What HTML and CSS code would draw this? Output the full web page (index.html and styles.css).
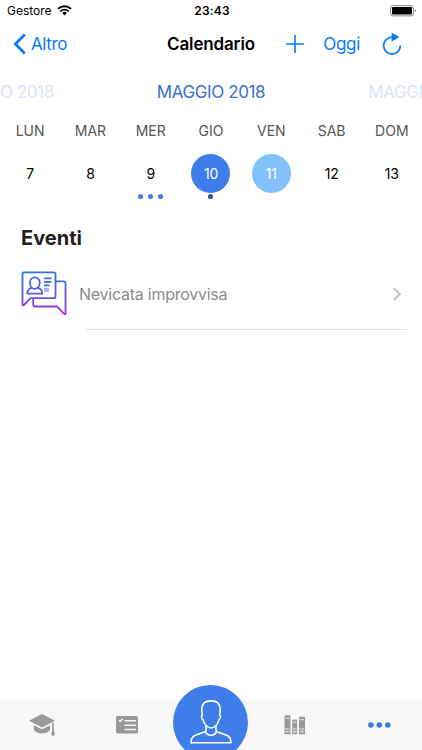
FILE: index.html
```html
<!DOCTYPE html>
<html lang="it">
<head>
  <meta charset="UTF-8">
  <meta name="viewport" content="width=device-width, initial-scale=1">
  <title>Calendario</title>
  <link rel="stylesheet" href="styles.css">
</head>
<body>
  <div class="status-bar">
    <div class="carrier">
      <span>Gestore</span>
      <svg width="15" height="11" viewBox="0 0 15 11">
        <path d="M1 3.9a9.4 9.4 0 0 1 13 0" fill="none" stroke="#000" stroke-width="1.9"/>
        <path d="M3.3 6.3a6.1 6.1 0 0 1 8.4 0" fill="none" stroke="#000" stroke-width="1.8"/>
        <path d="M7.5 10.4L5.1 8a3.5 3.5 0 0 1 4.8 0z"/>
      </svg>
    </div>
    <div class="clock">23:43</div>
    <svg class="battery" width="27" height="12" viewBox="0 0 27 12">
      <rect x=".6" y=".6" width="22.8" height="10.3" rx="2.4" fill="#fff" stroke="#888" stroke-width="1"/>
      <rect x="2" y="2" width="20" height="7.5" rx="1"/>
      <path d="M24.7 4v3.6q1.4-.5 1.4-1.8t-1.4-1.8z" fill="#888"/>
    </svg>
  </div>

  <header class="nav">
    <a class="back" href="#">
      <svg width="14" height="22" viewBox="0 0 14 22">
        <path d="M11.8 1.6L2.4 11l9.4 9.4" fill="none" stroke="#0b7bf7" stroke-width="2.8"/>
      </svg>
      <span>Altro</span>
    </a>
    <h1>Calendario</h1>
    <div class="actions">
      <svg width="18" height="18" viewBox="0 0 18 18">
        <path d="M9 0v18M0 9h18" stroke="#0b7bf7" stroke-width="1.6"/>
      </svg>
      <a class="today" href="#">Oggi</a>
      <svg class="refresh" width="20" height="24" viewBox="0 0 20 24">
        <path d="M11.5 5.2H10a8.4 8.4 0 1 0 8.4 8.4" fill="none" stroke="#0b7bf7" stroke-width="1.8"/>
        <path d="M9.6.7l7.9 4.4-7.9 4.6z" fill="#0b7bf7"/>
      </svg>
    </div>
  </header>

  <div class="months">
    <span class="month faded">MAGGIO 2018</span>
    <span class="month">MAGGIO 2018</span>
    <span class="month faded">MAGGIO 2018</span>
  </div>

  <div class="week">
    <div class="day"><span class="name">LUN</span><span class="num">7</span></div>
    <div class="day"><span class="name">MAR</span><span class="num">8</span></div>
    <div class="day"><span class="name">MER</span><span class="num">9</span><span class="dots"><i></i><i></i><i></i></span></div>
    <div class="day selected"><span class="name">GIO</span><span class="num">10</span><span class="dots"><i></i></span></div>
    <div class="day current"><span class="name">VEN</span><span class="num">11</span></div>
    <div class="day"><span class="name">SAB</span><span class="num">12</span></div>
    <div class="day"><span class="name">DOM</span><span class="num">13</span></div>
  </div>

  <main>
    <h2>Eventi</h2>
    <div class="event">
      <svg width="46" height="46" viewBox="0 0 46 46" fill="none" stroke="url(#grad)" stroke-width="1.8" stroke-linejoin="round" stroke-linecap="round">
        <defs>
          <linearGradient id="grad" gradientUnits="userSpaceOnUse" x1="0" y1="1" x2="0" y2="44">
            <stop offset="0" stop-color="#2878e0"/>
            <stop offset=".5" stop-color="#6557dc"/>
            <stop offset="1" stop-color="#b02ee0"/>
          </linearGradient>
        </defs>
        <path d="M3 1.4h29.5q2 0 2 2v21.8q0 2-2 2H9.5L2.9 34q-1.4 1-1.4-1V3.4q0-2 1.5-2z"/>
        <path d="M34.8 10.3h7.7q2 0 2 2v29.9q0 1.8-1.4.6L36 35.5H14.2q-2 0-2-2v-6"/>
        <path d="M13.8 6.4c-2.8 0-4.9 2.1-4.9 5.4 0 3.4 2.1 6.1 4.9 6.1s5-2.7 5-6.1c0-3.3-2.1-5.4-5-5.4z"/>
        <path d="M10.5 16.9c-2.6.8-4.2 1.8-4.2 5.7h15c0-3.9-1.7-4.9-4.2-5.7"/>
        <path d="M23.8 7.4h6M23.8 10.9h6M23.8 14.4h4.2"/>
        <path d="M23 16.8h5v4h-5z" fill="#a5b0f0" stroke="none"/>
      </svg>
      <span class="title">Nevicata improvvisa</span>
      <svg class="chevron" width="10" height="14" viewBox="0 0 10 14">
        <path d="M1.5 1l6.4 6-6.4 6" fill="none" stroke="#c0c0c4" stroke-width="1.8"/>
      </svg>
    </div>
  </main>

  <nav class="tabs">
    <a href="#">
      <svg width="28" height="24" viewBox="0 0 28 24" fill="#999">
        <path d="M14 1L1 7.8l13 6.6L27 7.8z"/>
        <path d="M6 12.2l8 4.1 8-4.1v4.7c-1.8 2.3-4.5 3.4-8 3.4s-6.2-1.1-8-3.4z"/>
        <path d="M24.2 9.8h1.7v8.2l1 3-1.8 2.4-1.9-2.4 1-3z"/>
      </svg>
    </a>
    <a href="#">
      <svg width="22" height="18" viewBox="0 0 22 18">
        <rect width="22" height="17.4" rx="2" fill="#999"/>
        <path d="M8.5 4.7H20M8.5 9.2H20M8.5 13.4H20" stroke="#f8f8f8" stroke-width="1.5"/>
        <path d="M2.8 4.3l1.3 1.2 2.7-2.7" fill="none" stroke="#f8f8f8" stroke-width="1.5"/>
      </svg>
    </a>
    <a class="profile" href="#">
      <svg width="42" height="46" viewBox="0 0 42 46" fill="none" stroke="#fff" stroke-width="1.6" stroke-linejoin="round">
        <path d="M21 1.9c-6.6 0-9.2 3.2-9.2 8.2 0 2.4.4 4.4.5 6.3-1.2.2-.9 3.9.8 4.4.8 4.3 4.7 8.2 7.9 8.2s7.1-3.9 7.9-8.2c1.7-.5 2-4.2.8-4.4.1-1.9.5-3.9.5-6.3 0-5-2.6-8.2-9.2-8.2z"/>
        <path d="M16 26.5v4.4q0 1.6-1.6 2.2l-9 3.2C2.4 37.5 1 39.7.9 43.8h40.2c-.1-4.1-1.5-6.3-4.5-7.5l-9-3.2q-1.6-.6-1.6-2.2v-4.4"/>
        <path d="M15.6 32.5c.6 2.3 2.6 3.7 5.4 3.7s4.8-1.4 5.4-3.7"/>
      </svg>
    </a>
    <a href="#">
      <svg width="22" height="20" viewBox="0 0 22 20">
        <path d="M.5 1.2q0-1 1-1h4q1 0 1 1v18h-6zM8.2 5.5q0-1 1-1h3q1 0 1 1v13.7h-5zM15 2.7q0-1 1-1h4q1 0 1 1v16.5h-6z" fill="#999"/>
        <path d="M1.4 3.1h4.2M1.4 14h4.2M1.4 16.7h4.2M9 7.1h3.4M9 14h3.4M9 16.7h3.4M15.9 4.7h4.2M15.9 14h4.2M15.9 16.7h4.2" stroke="#f8f8f8" stroke-width=".9"/>
      </svg>
    </a>
    <a href="#">
      <svg width="24" height="6" viewBox="0 0 24 6" fill="#3d7ade">
        <circle cx="2.9" cy="3" r="2.8"/>
        <circle cx="11.3" cy="3" r="2.8"/>
        <circle cx="19.8" cy="3" r="2.8"/>
      </svg>
    </a>
  </nav>
</body>
</html>
```
FILE: styles.css
```css
* {
  box-sizing: border-box;
}

body {
  margin: 0;
  height: 750px;
  display: flex;
  flex-direction: column;
  overflow: hidden;
  background: #fff;
  color: #000;
  font-family: Inter, "Liberation Sans", sans-serif;
}

a {
  color: #0b7bf7;
  text-decoration: none;
}

svg {
  display: block;
  flex: none;
}

.status-bar {
  height: 22px;
  padding: 0 5px 1px 7px;
  display: grid;
  grid-template-columns: 1fr auto 1fr;
  align-items: center;
  font-size: 12px;
}

.carrier {
  display: flex;
  align-items: center;
  gap: 5px;
}

.clock {
  font-weight: 600;
  letter-spacing: 0.2px;
}

.battery {
  justify-self: end;
}

.nav {
  height: 44px;
  padding: 0 13px 1px;
  display: grid;
  grid-template-columns: 1fr auto 1fr;
  align-items: center;
  font-size: 17px;
}

.back {
  display: flex;
  align-items: center;
  gap: 4px;
  letter-spacing: -0.4px;
}

h1 {
  margin: 0;
  font-size: 17px;
  font-weight: 600;
  letter-spacing: -0.15px;
}

.actions {
  display: flex;
  justify-content: flex-end;
  align-items: center;
  padding-right: 7px;
}

.today {
  margin: 0 22px 0 19px;
  letter-spacing: -0.3px;
}

.months {
  height: 50px;
  padding-top: 1px;
  display: flex;
  justify-content: center;
  align-items: center;
  gap: 103px;
  overflow: hidden;
}

.month {
  flex: none;
  color: #3d70cf;
  font-size: 17px;
  letter-spacing: -0.4px;
}

.faded {
  color: #dce4f6;
}

.week {
  display: grid;
  grid-template-columns: repeat(7, 1fr);
  height: 98px;
}

.day {
  display: flex;
  flex-direction: column;
  align-items: center;
}

.name {
  height: 38px;
  line-height: 29px;
  color: #555;
  font-size: 14px;
}

.num {
  width: 39px;
  height: 39px;
  border-radius: 50%;
  line-height: 39px;
  text-align: center;
  font-size: 14px;
  letter-spacing: -0.2px;
}

.selected .num {
  background: #3e7dea;
  color: #fff;
}

.current .num {
  background: #83c1fc;
  color: #fff;
}

.dots {
  display: flex;
  gap: 5px;
  margin-top: 1px;
}

.dots i {
  width: 5px;
  height: 5px;
  border-radius: 50%;
  background: #3e7dea;
}

.selected .dots i {
  background: #2b4f9c;
}

main {
  flex: 1;
  padding: 12px 15px 0 21px;
}

h2 {
  margin: 0;
  line-height: 25px;
  font-size: 20px;
  font-weight: 700;
  color: #202020;
}

.event {
  position: relative;
  height: 79px;
  padding: 7px 5px 0 0;
  display: flex;
  align-items: center;
}

/* separator starts under the text, not under the icon */
.event::after {
  content: "";
  position: absolute;
  left: 65px;
  right: 0;
  bottom: 0;
  height: 1px;
  background: #e3e3e5;
}

.title {
  flex: 1;
  margin-left: 12px;
  color: #8c8c8c;
  font-size: 16px;
  letter-spacing: -0.25px;
}

.tabs {
  height: 50px;
  display: grid;
  grid-template-columns: repeat(5, 1fr);
  grid-template-rows: 50px;
  align-items: center;
  justify-items: center;
  background: #f8f8f8;
}

.profile {
  width: 75px;
  height: 75px;
  margin-top: -6px;
  display: flex;
  justify-content: center;
  align-items: center;
  border-radius: 50%;
  background: #3e7dea;
}
```
